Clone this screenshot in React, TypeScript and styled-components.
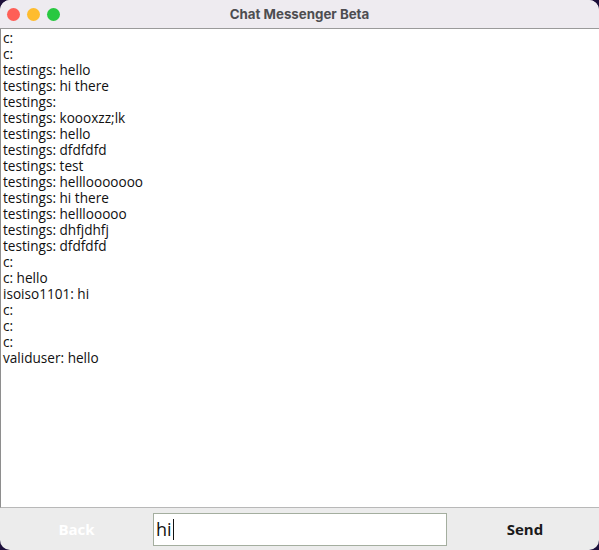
import React from "react";
import styled, { createGlobalStyle } from "styled-components";

const Global = createGlobalStyle`
  html, body { margin: 0; padding: 0; background: #1c0f3a; }
  body { width: 599px; height: 550px; overflow: hidden; }
`;

const Window = styled.div`
  width: 599px;
  height: 550px;
  border-radius: 10px;
  overflow: hidden;
  background: #ececec;
  display: flex;
  flex-direction: column;
  font-family: "Liberation Sans", "DejaVu Sans", sans-serif;
`;

const TitleBar = styled.div`
  height: 29px;
  flex: none;
  background: #eeebf0;
  border-bottom: 1px solid #9a9a9a;
  display: flex;
  align-items: center;
  position: relative;
  box-sizing: border-box;
`;

const Lights = styled.div`
  display: flex;
  gap: 7px;
  padding-left: 7px;
`;

const Light = styled.span<{ $c: string }>`
  width: 13px;
  height: 13px;
  border-radius: 50%;
  background: ${(p) => p.$c};
`;

const Title = styled.div`
  position: absolute;
  left: 0;
  right: 0;
  text-align: center;
  font-family: Inter, "Liberation Sans", sans-serif;
  font-weight: 700;
  font-size: 13.3px;
  color: #4d4d50;
`;

const Log = styled.div`
  flex: 1;
  background: #fff;
  border-left: 1px solid #8e8e8e;
  border-bottom: 1px solid #b8b8b8;
  padding: 1px 0 0 2px;
  font-family: "Open Sans", sans-serif;
  font-size: 13.6px;
  line-height: 16px;
  color: #111;
`;

const Line = styled.div`
  white-space: pre;
  height: 16px;
`;

const Bottom = styled.div`
  height: 42px;
  flex: none;
  display: grid;
  grid-template-columns: 153px 294px 1fr;
  align-items: center;
`;

const Btn = styled.div<{ $disabled?: boolean }>`
  text-align: center;
  font-family: "Open Sans", sans-serif;
  font-weight: 700;
  font-size: 15px;
  color: ${(p) => (p.$disabled ? "#ffffff" : "#1a1a1a")};
`;

const SendBtn = styled(Btn)`
  padding-left: 4px;
`;

const Field = styled.div`
  height: 33px;
  box-sizing: border-box;
  border: 1px solid #a4ae9f;
  background: #fff;
  display: flex;
  align-items: center;
  padding-left: 2px;
  font-family: "Open Sans", sans-serif;
  font-size: 18px;
  color: #111;
`;

const Caret = styled.span`
  display: inline-block;
  width: 1px;
  height: 21px;
  background: #111;
  margin-left: 1px;
`;

const lines = [
  "c:",
  "c:",
  "testings: hello",
  "testings: hi there",
  "testings:",
  "testings: koooxzz;lk",
  "testings: hello",
  "testings: dfdfdfd",
  "testings: test",
  "testings: helllooooooo",
  "testings: hi there",
  "testings: helllooooo",
  "testings: dhfjdhfj",
  "testings: dfdfdfd",
  "c:",
  "c: hello",
  "isoiso1101: hi",
  "c:",
  "c:",
  "c:",
  "validuser: hello",
];

export default function App() {
  return (
    <>
      <Global />
      <Window>
        <TitleBar>
          <Lights>
            <Light $c="#fe5f57" />
            <Light $c="#febc2e" />
            <Light $c="#28c840" />
          </Lights>
          <Title>Chat Messenger Beta</Title>
        </TitleBar>
        <Log>
          {lines.map((l, i) => (
            <Line key={i}>{l}</Line>
          ))}
        </Log>
        <Bottom>
          <Btn $disabled>Back</Btn>
          <Field>
            hi<Caret />
          </Field>
          <SendBtn>Send</SendBtn>
        </Bottom>
      </Window>
    </>
  );
}
